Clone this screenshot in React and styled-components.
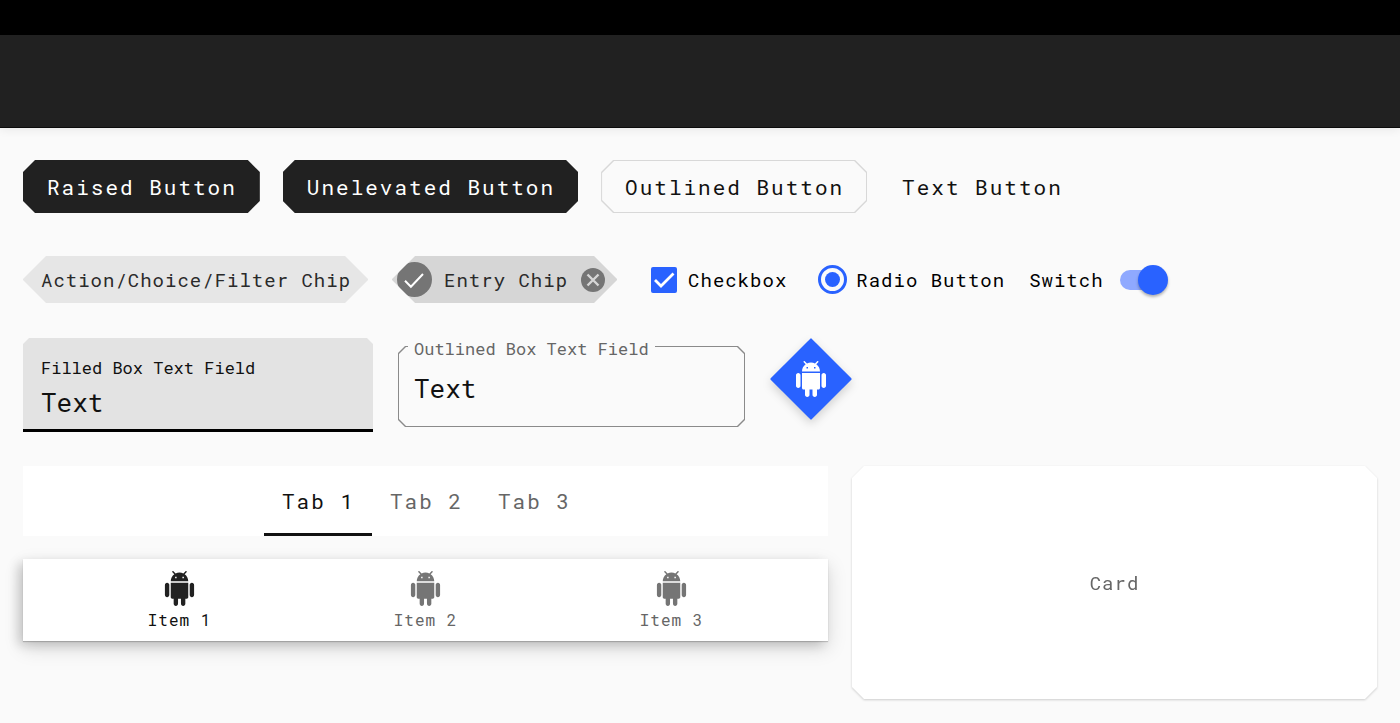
import React from "react";
import styled, { createGlobalStyle, css } from "styled-components";

const color = {
  ink: "#111111",
  primary: "#212121",
  accent: "#2962ff",
  page: "#fafafa",
  muted: "#666666",
  icon: "#757575",
};

const cutCorners = (size) => css`
  clip-path: polygon(
    ${size}px 0,
    calc(100% - ${size}px) 0,
    100% ${size}px,
    100% calc(100% - ${size}px),
    calc(100% - ${size}px) 100%,
    ${size}px 100%,
    0 calc(100% - ${size}px),
    0 ${size}px
  );
`;

const GlobalStyle = createGlobalStyle`
  *, *::before, *::after { box-sizing: border-box; }
  body {
    margin: 0;
    background: ${color.page};
    color: ${color.ink};
    font: 19px/24px "Roboto Mono", "DejaVu Sans Mono", monospace;
    letter-spacing: 1px;
  }
  button, input {
    margin: 0;
    padding: 0;
    border: 0;
    background: none;
    color: inherit;
    font: inherit;
    letter-spacing: inherit;
  }
  button { cursor: pointer; }
  svg { display: block; }
`;

const StatusBar = styled.div`
  height: 35px;
  background: #000000;
`;

const AppBar = styled.header`
  height: 93px;
  background: ${color.primary};
  border-bottom: 1px solid #0c0c0c;
  box-shadow: 0 2px 9px rgba(0, 0, 0, 0.07);
`;

const Page = styled.main`
  padding: 32px 23px 24px;
`;

const ButtonRow = styled.div`
  display: flex;
  flex-wrap: wrap;
  gap: 23px;
  margin-bottom: 43px;
`;

const Button = styled.button`
  height: 53px;
  padding: 0 23px 0 24px;
  font-size: 21px;
  letter-spacing: 2px;
  white-space: nowrap;
`;

const FilledButton = styled(Button)`
  ${cutCorners(12)}
  background: ${color.primary};
  color: #ffffff;
`;

const OutlinedButton = styled(Button)`
  ${cutCorners(12)}
  position: relative;
  z-index: 0;
  background: #d8d8d8;

  &::before {
    ${cutCorners(12)}
    content: "";
    position: absolute;
    inset: 1px;
    z-index: -1;
    background: ${color.page};
  }
`;

const TextButton = styled(Button)`
  padding: 0 12px;
`;

const ControlRow = styled.div`
  display: flex;
  flex-wrap: wrap;
  align-items: center;
  gap: 24px;
  margin-bottom: 35px;
`;

const chipShape = css`
  ${cutCorners(23)}
  height: 47px;
  color: #2a2a2a;
  white-space: nowrap;
`;

const ActionChip = styled.button`
  ${chipShape}
  padding: 0 17px 0 18px;
  background: #e6e6e6;
`;

const EntryChip = styled.div`
  ${chipShape}
  display: flex;
  align-items: center;
  padding: 0 12px 0 5px;
  background: #d6d6d6;
`;

const ChipText = styled.span`
  padding: 0 13px 0 12px;
`;

const Control = styled.label`
  display: flex;
  align-items: center;
  color: #000000;
`;

const CheckboxControl = styled(Control)`
  gap: 11px;
  padding-left: 10px;
`;

const RadioControl = styled(Control)`
  gap: 9px;
  padding-left: 7px;
`;

const SwitchControl = styled(Control)`
  gap: 16px;
`;

const TickBox = styled.span`
  display: grid;

  & > * {
    grid-area: 1 / 1;
  }
  svg {
    pointer-events: none;
    visibility: hidden;
  }
  input:checked + svg {
    visibility: visible;
  }
`;

const Checkbox = styled.input`
  appearance: none;
  width: 26px;
  height: 26px;
  border: 3px solid ${color.muted};
  border-radius: 2px;

  &:checked {
    border-color: ${color.accent};
    background: ${color.accent};
  }
`;

const Radio = styled.input`
  appearance: none;
  width: 29px;
  height: 29px;
  padding: 4px;
  border: 3px solid ${color.muted};
  border-radius: 50%;

  &:checked {
    border-color: ${color.accent};
    background: ${color.accent} content-box;
    background-clip: content-box;
  }
`;

const Switch = styled.input`
  appearance: none;
  display: grid;
  align-items: center;
  width: 48px;
  height: 30px;

  &::before,
  &::after {
    content: "";
    grid-area: 1 / 1;
  }
  &::before {
    width: 40px;
    height: 20px;
    border-radius: 10px;
    background: #c4c4c4;
  }
  &::after {
    width: 30px;
    height: 30px;
    border-radius: 50%;
    background: #ffffff;
    box-shadow: 0 2px 3px rgba(0, 0, 0, 0.3);
  }
  &:checked::before {
    background: #8fa9ff;
  }
  &:checked::after {
    justify-self: end;
    background: ${color.accent};
  }
`;

const FieldRow = styled.div`
  display: flex;
  flex-wrap: wrap;
  align-items: flex-start;
  gap: 25px;
  margin-bottom: 34px;
`;

const FilledField = styled.label`
  display: flex;
  flex-direction: column;
  width: 350px;
  height: 94px;
  padding: 19px 18px 0;
  background: #e3e3e3;
  border-bottom: 3px solid #000000;
  clip-path: polygon(6px 0, calc(100% - 6px) 0, 100% 6px, 100% 100%, 0 100%, 0 6px);
`;

const FieldLabel = styled.span`
  font-size: 17px;
  line-height: 22px;
  letter-spacing: 0;
  white-space: nowrap;
`;

const FieldInput = styled.input`
  width: 100%;
  height: 46px;
  font-size: 26px;
  letter-spacing: 0;
  outline: none;
`;

const OutlinedField = styled.label`
  position: relative;
  width: 347px;
  padding-top: 8px;
`;

const NotchLabel = styled(FieldLabel)`
  position: absolute;
  top: 0;
  left: 10px;
  z-index: 1;
  padding: 0 6px;
  background: ${color.page};
  color: ${color.muted};
`;

const OutlineFrame = styled.span`
  ${cutCorners(7)}
  display: block;
  padding: 1px;
  background: #8a8a8a;
`;

const OutlineFill = styled.span`
  ${cutCorners(7)}
  display: flex;
  align-items: center;
  height: 79px;
  padding: 2px 16px 0 15px;
  background: ${color.page};
`;

const Fab = styled.button`
  position: relative;
  z-index: 0;
  display: grid;
  place-items: center;
  width: 82px;
  height: 82px;
  color: #ffffff;
  filter: drop-shadow(0 4px 5px rgba(0, 0, 0, 0.16));

  &::before {
    content: "";
    position: absolute;
    inset: 12px;
    z-index: -1;
    border-radius: 1px;
    background: ${color.accent};
    transform: rotate(45deg);
  }
`;

const Panels = styled.div`
  display: grid;
  grid-template-columns: minmax(0, 23fr) minmax(0, 15fr);
  gap: 24px;
`;

const BarColumn = styled.div`
  display: flex;
  flex-direction: column;
  gap: 23px;
`;

const TabBar = styled.div`
  display: flex;
  justify-content: center;
  height: 70px;
  background: #ffffff;
`;

const Tab = styled.button`
  width: 108px;
  padding: 3px 0 0 2px;
  border-bottom: 3px solid ${(p) => (p.$active ? color.ink : "transparent")};
  color: ${(p) => (p.$active ? color.ink : color.muted)};
  font-size: 21px;
  letter-spacing: 2px;
`;

const BottomNav = styled.nav`
  display: flex;
  justify-content: center;
  height: 82px;
  background: #ffffff;
  box-shadow:
    0 1px 1px rgba(0, 0, 0, 0.18),
    0 7px 18px rgba(0, 0, 0, 0.15),
    -5px 4px 10px rgba(0, 0, 0, 0.14);
`;

const NavItem = styled.button`
  display: flex;
  flex-direction: column;
  align-items: center;
  gap: 3px;
  flex: 0 1 246px;
  padding-top: 12px;
  color: ${(p) => (p.$active ? color.primary : color.icon)};
  font-size: 16px;
  line-height: 22px;
`;

const NavText = styled.span`
  color: ${(p) => (p.$active ? color.ink : color.muted)};
`;

const Card = styled.section`
  position: relative;
  z-index: 0;
  display: grid;
  place-items: center;
  min-height: 233px;
  color: ${color.muted};
  filter: drop-shadow(0 1px 1px rgba(0, 0, 0, 0.18));

  &::before {
    ${cutCorners(12)}
    content: "";
    position: absolute;
    inset: 0;
    z-index: -1;
    background: #ffffff;
  }
`;

const AndroidIcon = ({ size }) => (
  <svg width={size} height={size} viewBox="0 0 24 24" fill="currentColor" aria-hidden="true">
    <path d="M6 18c0 .55.45 1 1 1h1v3.5c0 .83.67 1.5 1.5 1.5s1.5-.67 1.5-1.5V19h2v3.5c0 .83.67 1.5 1.5 1.5s1.5-.67 1.5-1.5V19h1c.55 0 1-.45 1-1V8H6v10zM3.5 8C2.67 8 2 8.67 2 9.5v7c0 .83.67 1.5 1.5 1.5S5 17.33 5 16.5v-7C5 8.67 4.33 8 3.5 8zm17 0c-.83 0-1.5.67-1.5 1.5v7c0 .83.67 1.5 1.5 1.5s1.5-.67 1.5-1.5v-7c0-.83-.67-1.5-1.5-1.5zm-4.97-5.84l1.3-1.3c.2-.2.2-.51 0-.71-.2-.2-.51-.2-.71 0l-1.48 1.48C13.85 1.23 12.95 1 12 1c-.96 0-1.86.23-2.66.63L7.85.15c-.2-.2-.51-.2-.71 0-.2.2-.2.51 0 .71l1.31 1.31C6.97 3.26 6 5.01 6 7h12c0-1.99-.97-3.75-2.47-4.84zM10 5H9V4h1v1zm5 0h-1V4h1v1z" />
  </svg>
);

const ChipCheckIcon = () => (
  <svg width="35" height="35" viewBox="0 0 35 35" fill="none" aria-hidden="true">
    <circle cx="17.5" cy="17.5" r="17.5" fill={color.icon} />
    <path d="M8 18.8l5.900 5.900L26 12" stroke="#ffffff" strokeWidth="2" />
  </svg>
);

const ChipCloseIcon = () => (
  <svg width="24" height="24" viewBox="0 0 24 24" fill="none" aria-hidden="true">
    <circle cx="12" cy="12" r="12" fill={color.icon} />
    <path d="M6.500 6.500l11 11M17.500 6.500l-11 11" stroke="#d6d6d6" strokeWidth="2.4" />
  </svg>
);

const TickIcon = () => (
  <svg width="26" height="26" viewBox="0 0 26 26" fill="none" aria-hidden="true">
    <path d="M4 13l6 6L22.500 6.500" stroke="#ffffff" strokeWidth="2.8" />
  </svg>
);

const tabs = ["Tab 1", "Tab 2", "Tab 3"];
const items = ["Item 1", "Item 2", "Item 3"];

export default function App() {
  const [tab, setTab] = React.useState(0);
  const [item, setItem] = React.useState(0);

  return (
    <>
      <GlobalStyle />
      <StatusBar />
      <AppBar />
      <Page>
        <ButtonRow>
          <FilledButton type="button">Raised Button</FilledButton>
          <FilledButton type="button">Unelevated Button</FilledButton>
          <OutlinedButton type="button">Outlined Button</OutlinedButton>
          <TextButton type="button">Text Button</TextButton>
        </ButtonRow>

        <ControlRow>
          <ActionChip type="button">Action/Choice/Filter Chip</ActionChip>
          <EntryChip>
            <ChipCheckIcon />
            <ChipText>Entry Chip</ChipText>
            <button type="button" aria-label="Remove">
              <ChipCloseIcon />
            </button>
          </EntryChip>
          <CheckboxControl>
            <TickBox>
              <Checkbox type="checkbox" defaultChecked />
              <TickIcon />
            </TickBox>
            Checkbox
          </CheckboxControl>
          <RadioControl>
            <Radio type="radio" name="choice" defaultChecked />
            Radio Button
          </RadioControl>
          <SwitchControl>
            Switch
            <Switch type="checkbox" role="switch" defaultChecked />
          </SwitchControl>
        </ControlRow>

        <FieldRow>
          <FilledField>
            <FieldLabel>Filled Box Text Field</FieldLabel>
            <FieldInput type="text" defaultValue="Text" />
          </FilledField>
          <OutlinedField>
            <NotchLabel>Outlined Box Text Field</NotchLabel>
            <OutlineFrame>
              <OutlineFill>
                <FieldInput type="text" defaultValue="Text" />
              </OutlineFill>
            </OutlineFrame>
          </OutlinedField>
          <Fab type="button" aria-label="Android">
            <AndroidIcon size={36} />
          </Fab>
        </FieldRow>

        <Panels>
          <BarColumn>
            <TabBar role="tablist">
              {tabs.map((name, i) => (
                <Tab
                  key={name}
                  type="button"
                  role="tab"
                  aria-selected={tab === i}
                  $active={tab === i}
                  onClick={() => setTab(i)}
                >
                  {name}
                </Tab>
              ))}
            </TabBar>
            <BottomNav>
              {items.map((name, i) => (
                <NavItem key={name} type="button" $active={item === i} onClick={() => setItem(i)}>
                  <AndroidIcon size={35} />
                  <NavText $active={item === i}>{name}</NavText>
                </NavItem>
              ))}
            </BottomNav>
          </BarColumn>
          <Card>Card</Card>
        </Panels>
      </Page>
    </>
  );
}
